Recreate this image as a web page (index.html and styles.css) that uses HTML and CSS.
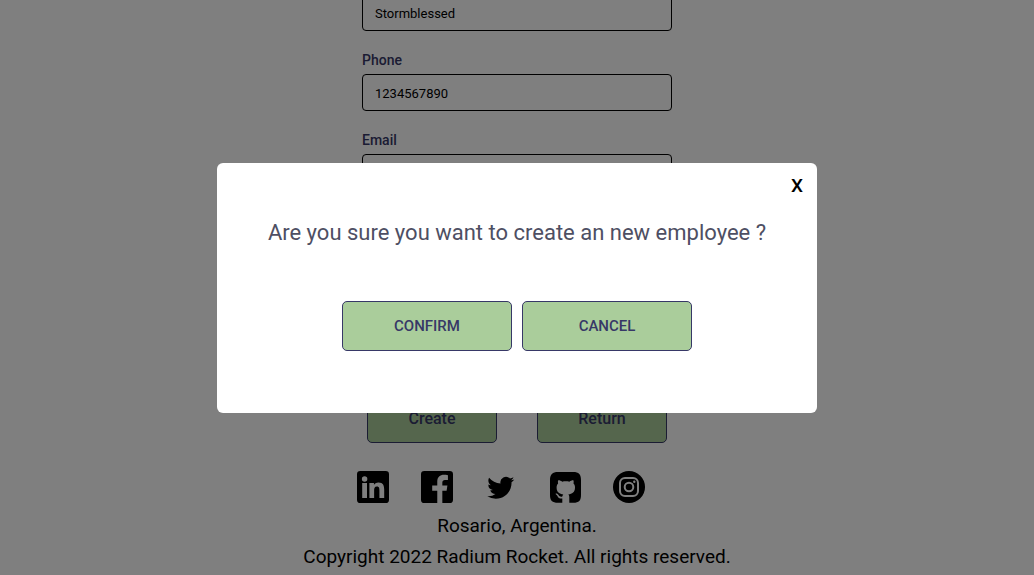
FILE: index.html
```html
<!DOCTYPE html>
<html lang="en">
<head>
<meta charset="utf-8">
<meta name="viewport" content="width=device-width, initial-scale=1">
<title>Create employee</title>
<link rel="stylesheet" href="styles.css">
</head>
<body>
<div class="page">
  <form class="form">
    <div class="field">
      <input class="input" type="text" aria-label="Last name" value="Stormblessed">
    </div>
    <div class="field">
      <label class="label" for="phone">Phone</label>
      <input class="input" id="phone" type="text" value="1234567890">
    </div>
    <div class="field">
      <label class="label" for="email">Email</label>
      <input class="input" id="email" type="email">
    </div>
    <div class="form-actions">
      <button class="button" type="button">Create</button>
      <button class="button" type="button">Return</button>
    </div>
  </form>
  <footer class="footer">
    <nav class="social">
      <a class="social-link" href="#" aria-label="LinkedIn">
        <svg class="icon" viewBox="0 0 24 24"><path fill-rule="evenodd" d="M2.500 0h19a2.500 2.500 0 0 1 2.500 2.500v19a2.500 2.500 0 0 1-2.500 2.500h-19a2.500 2.500 0 0 1-2.500-2.500v-19a2.500 2.500 0 0 1 2.500-2.500zM20.400 20.200h-3.600v-5.600c0-1.300 0-3-1.850-3s-2.100 1.450-2.100 2.900v5.700H9.300V9h3.400v1.500c.5-.9 1.700-1.800 3.400-1.800 3.600 0 4.300 2.400 4.300 5.400zM5.700 8.100a2.050 2.050 0 1 1 0-4.100 2.050 2.050 0 0 1 0 4.100zM7.500 20.200H3.900V9h3.600z"/></svg>
      </a>
      <a class="social-link" href="#" aria-label="Facebook">
        <svg class="icon" viewBox="0 0 24 24"><path d="M2.500 0h19a2.500 2.500 0 0 1 2.500 2.500v19a2.500 2.500 0 0 1-2.500 2.500H16v-9.200h3.200l.6-3.900H16V8.600c0-1.200.7-1.900 2-1.900h2.200V3.100c-1-.2-2-.3-2.900-.3-3.100 0-5.100 1.800-5.100 5v3.100H8.400v3.900h3.800V24H2.500a2.500 2.500 0 0 1-2.500-2.500v-19a2.500 2.500 0 0 1 2.500-2.500z"/></svg>
      </a>
      <a class="social-link" href="#" aria-label="Twitter">
        <svg class="icon" viewBox="-2 -2.900 28.400 28.400"><path d="M23.953 4.570a10 10 0 0 1-2.825.775 4.958 4.958 0 0 0 2.163-2.723c-.951.555-2.005.959-3.127 1.184a4.920 4.920 0 0 0-8.384 4.482C7.690 8.095 4.067 6.130 1.640 3.162a4.822 4.822 0 0 0-.666 2.475c0 1.710.870 3.213 2.188 4.096a4.904 4.904 0 0 1-2.228-.616v.060a4.923 4.923 0 0 0 3.946 4.827 4.996 4.996 0 0 1-2.212.085 4.936 4.936 0 0 0 4.604 3.417 9.867 9.867 0 0 1-6.102 2.105c-.390 0-.779-.023-1.170-.067a13.995 13.995 0 0 0 7.557 2.209c9.053 0 13.998-7.496 13.998-13.985 0-.210 0-.420-.015-.630A9.935 9.935 0 0 0 24 4.590z"/></svg>
      </a>
      <a class="social-link" href="#" aria-label="GitHub">
        <svg class="icon" viewBox="0 0 32 32"><path d="M9 1h15C30 1 32 3.500 32 9v15c0 5.500-2 7.800-7.500 7.800h-4.200v-5.600c0-1.300-.4-2.200-1-2.700 3.800-.5 6.700-2.200 6.700-7 0-1.700-.5-3-1.500-4 .3-1 .3-2.200-.1-3.200-1.200-.2-2.700.5-4 1.400-2.300-.6-4.900-.6-7.200 0-1.300-.9-2.800-1.600-4-1.400-.4 1-.4 2.200-.1 3.200-1 1-1.500 2.300-1.500 4 0 4.800 2.900 6.500 6.700 7-.5.5-.9 1.200-1 2-1.400.5-2.700.2-3.600-1.200-.7-1.200-1.700-1.900-2.700-1.800-.6.1-.6.500 0 .9 1 .6 1.300 1.300 1.700 2.100.8 1.700 2.500 2.300 4.600 1.900v4.400H9C3.200 31.800 1 29.500 1 24V9C1 3.500 3.500 1 9 1z"/></svg>
      </a>
      <a class="social-link" href="#" aria-label="Instagram">
        <svg class="icon" viewBox="0 0 32 32"><circle cx="16" cy="16" r="16"/><g class="icon-lines"><rect x="7" y="7" width="18" height="18" rx="5"/><circle cx="16" cy="16" r="4.300"/></g><circle class="icon-dot" cx="21.300" cy="10.700" r="1.200"/></svg>
      </a>
    </nav>
    <p class="footer-text">Rosario, Argentina.</p>
    <p class="footer-text">Copyright 2022 Radium Rocket. All rights reserved.</p>
  </footer>
</div>
<div class="overlay">
  <div class="modal" role="dialog" aria-modal="true" aria-labelledby="question">
    <button class="close" type="button">X</button>
    <p class="question" id="question">Are you sure you want to create an new employee ?</p>
    <div class="modal-actions">
      <button class="button button-large" type="button">CONFIRM</button>
      <button class="button button-large" type="button">CANCEL</button>
    </div>
  </div>
</div>
</body>
</html>
```
FILE: styles.css
```css
* {
  box-sizing: border-box;
}

body {
  margin: 0;
  font-family: Roboto, sans-serif;
  color: #000;
  background: #fff;
}

.page {
  display: flex;
  flex-direction: column;
  justify-content: flex-end;
  align-items: center;
  height: 100vh;
  overflow: hidden;
}

.form {
  flex-shrink: 0;
  display: flex;
  flex-direction: column;
  gap: 20px;
  width: 310px;
  max-width: 100%;
}

.field {
  display: flex;
  flex-direction: column;
}

.label {
  height: 23px;
  font-size: 14px;
  line-height: 19px;
  font-weight: 500;
  color: #373867;
}

.input {
  width: 100%;
  height: 37px;
  padding: 2px 12px 0;
  border: 1px solid #000;
  border-radius: 4px;
  background: transparent;
  font: 13px Roboto, sans-serif;
  color: #000;
}

.form-actions {
  display: flex;
  justify-content: center;
  gap: 40px;
  padding-top: 182px;
}

.button {
  width: 130px;
  height: 50px;
  padding: 1px 6px 0;
  border: 1px solid #373867;
  border-radius: 5px;
  background: #aacd9b;
  font: 500 16px Roboto, sans-serif;
  color: #373867;
}

.button-large {
  width: 170px;
  font-size: 15px;
}

.footer {
  flex-shrink: 0;
  padding: 28px 0 3px;
  text-align: center;
}

.social {
  display: flex;
  justify-content: center;
  padding-bottom: 7px;
}

.social-link {
  margin-right: 32px;
  color: #000;
}

.icon {
  display: block;
  width: 32px;
  height: 32px;
  fill: currentColor;
}

.icon-lines {
  fill: none;
  stroke: #fff;
  stroke-width: 2;
}

.icon-dot {
  fill: #fff;
}

.footer-text {
  margin: 0;
  font-size: 19px;
  line-height: 31px;
}

.overlay {
  position: fixed;
  inset: 0;
  display: flex;
  justify-content: center;
  align-items: center;
  background: rgba(0, 0, 0, 0.5);
}

.modal {
  display: flex;
  flex-direction: column;
  width: 600px;
  max-width: 100%;
  padding: 12px 14px 62px;
  border-radius: 6px;
  background: #fff;
}

.close {
  align-self: flex-end;
  padding: 0;
  border: 0;
  background: none;
  font: 500 19px/22px Roboto, sans-serif;
  color: #000;
}

.question {
  margin: 21px 0 53px;
  font-size: 22px;
  line-height: 30px;
  text-align: center;
  color: #4e4f63;
}

.modal-actions {
  display: flex;
  justify-content: center;
  gap: 10px;
}
```
